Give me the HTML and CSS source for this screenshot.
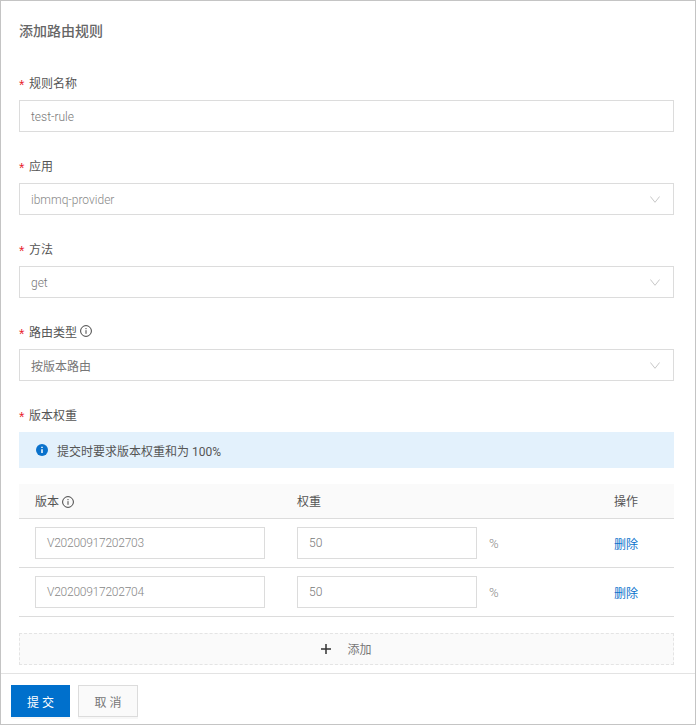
FILE: index.html
```html
<!DOCTYPE html>
<html lang="zh-CN">
<head>
  <meta charset="UTF-8">
  <title>添加路由规则</title>
  <link rel="stylesheet" href="styles.css">
</head>
<body>
  <div class="panel">
    <div class="content">
      <h2 class="title">添加路由规则</h2>

      <div class="field">
        <label class="field-label">规则名称</label>
        <div class="control latin">test-rule</div>
      </div>

      <div class="field">
        <label class="field-label">应用</label>
        <div class="control select latin">
          <span class="muted">ibmmq-provider</span>
          <svg class="arrow" viewBox="0 0 10 7"><path d="M.4.5 5 6.300 9.600.5"/></svg>
        </div>
      </div>

      <div class="field">
        <label class="field-label">方法</label>
        <div class="control select latin">
          <span>get</span>
          <svg class="arrow" viewBox="0 0 10 7"><path d="M.4.5 5 6.300 9.600.5"/></svg>
        </div>
      </div>

      <div class="field">
        <label class="field-label">路由类型
          <svg class="help" viewBox="0 0 12 12"><circle cx="6" cy="6" r="5.400"/><path d="M6 5.200v3.600M6 3v1.200"/></svg>
        </label>
        <div class="control select">
          <span>按版本路由</span>
          <svg class="arrow" viewBox="0 0 10 7"><path d="M.4.5 5 6.300 9.600.5"/></svg>
        </div>
      </div>

      <div class="field">
        <label class="field-label">版本权重</label>
        <div class="alert">
          <svg class="alert-icon" viewBox="0 0 12 12"><circle cx="6" cy="6" r="6"/><path d="M6 5.200v3.800M6 2.700v1.300"/></svg>
          提交时要求版本权重和为 100%
        </div>

        <table class="weights">
          <thead>
            <tr>
              <th class="col-version">版本
                <svg class="help" viewBox="0 0 12 12"><circle cx="6" cy="6" r="5.400"/><path d="M6 5.200v3.600M6 3v1.200"/></svg>
              </th>
              <th class="col-weight">权重</th>
              <th class="col-action">操作</th>
            </tr>
          </thead>
          <tbody>
            <tr>
              <td class="col-version"><div class="control cell-version">V20200917202703</div></td>
              <td class="col-weight"><div class="weight-wrap"><div class="control cell-weight">50</div><span class="unit">%</span></div></td>
              <td class="col-action"><a class="link">删除</a></td>
            </tr>
            <tr>
              <td class="col-version"><div class="control cell-version">V20200917202704</div></td>
              <td class="col-weight"><div class="weight-wrap"><div class="control cell-weight">50</div><span class="unit">%</span></div></td>
              <td class="col-action"><a class="link">删除</a></td>
            </tr>
          </tbody>
        </table>

        <div class="add-row">
          <svg class="plus" viewBox="0 0 10 10"><path d="M5 0v10M0 5h10"/></svg>
          <span>添加</span>
        </div>
      </div>
    </div>

    <div class="footer">
      <button class="btn btn-primary">提 交</button>
      <button class="btn btn-normal">取 消</button>
    </div>
  </div>
</body>
</html>
```

FILE: styles.css
```css
* {
  box-sizing: border-box;
}
body {
  margin: 0;
  font-family: "Roboto", "Noto Sans CJK SC", sans-serif;
  font-size: 12px;
  color: #555;
  background-color: #fff;
}

.panel {
  width: 696px;
  height: 725px;
  border: 1px solid #c4c4c4;
  display: flex;
  flex-direction: column;
}
.content {
  flex: 1;
  padding: 0 21px 0 18px;
}
.title {
  margin: 0;
  padding-top: 21px;
  height: 66px;
  font-size: 14px;
  line-height: 18px;
  font-weight: 500;
  color: #666;
}

/* form fields */
.field {
  height: 83px;
}
.field:last-child {
  height: auto;
}
.field-label {
  display: flex;
  align-items: center;
  height: 33px;
  padding-bottom: 3px;
  color: #555;
}
.field-label::before {
  content: "*";
  width: 10px;
  padding-top: 5px;
  color: #e8212b;
  font-family: "Liberation Sans", sans-serif;
  font-size: 14px;
  line-height: 14px;
}
.control {
  display: flex;
  align-items: center;
  height: 32px;
  padding: 0 11px;
  border: 1px solid #dcdcdc;
  color: #777;
  background-color: #fff;
}
.latin {
  padding-top: 1px;
  font-weight: 300;
}
.select {
  justify-content: space-between;
}
.muted {
  color: #888;
}
.arrow {
  width: 10px;
  height: 7px;
  margin-right: 2px;
  fill: none;
  stroke: #c8c8c8;
}
.help {
  width: 12px;
  height: 12px;
  margin-left: 3px;
  fill: none;
  stroke: #444;
}

/* notice */
.alert {
  display: flex;
  align-items: center;
  height: 36px;
  margin-top: 0;
  padding-left: 17px;
  color: #555;
  background-color: #e3f1fc;
}
.alert-icon {
  width: 12px;
  height: 12px;
  margin-right: 9px;
}
.alert-icon circle {
  fill: #0a72cc;
}
.alert-icon path {
  stroke: #fff;
  stroke-width: 1.500;
}

/* version table */
.weights {
  width: 655px;
  margin-top: 16px;
  border-collapse: collapse;
  table-layout: fixed;
}
.weights th {
  height: 34px;
  padding: 0;
  font-weight: 400;
  text-align: left;
  color: #555;
  background-color: #fafafa;
  border-bottom: 1px solid #dcdcdc;
}
.weights td {
  height: 49px;
  padding: 2px 0 1px;
  border-bottom: 1px solid #dcdcdc;
}
.weights .col-version {
  width: 278px;
  padding-left: 16px;
}
.weights .col-weight {
  width: 317px;
}
.weights .col-action {
  width: 60px;
}
.weights th .help {
  vertical-align: -2px;
  margin-left: 0;
}
.cell-version {
  width: 230px;
  color: #888;
  font-weight: 300;
  letter-spacing: -0.250px;
}
.cell-weight {
  width: 180px;
  font-weight: 300;
}
.weight-wrap {
  display: flex;
  align-items: center;
}
.unit {
  margin-left: 12px;
  color: #888;
  font-size: 13px;
  font-weight: 300;
}
.link {
  color: #0a72cc;
}

/* add button */
.add-row {
  display: flex;
  align-items: center;
  justify-content: center;
  height: 32px;
  margin-top: 16px;
  border: 1px dashed #e4e4e4;
  color: #777;
  background-color: #fafafa;
}
.plus {
  width: 10px;
  height: 10px;
  margin-right: 16px;
  fill: none;
  stroke: #333;
  stroke-width: 1.500;
}

/* footer */
.footer {
  display: flex;
  gap: 8px;
  height: 51px;
  padding: 11px 0 0 10px;
  border-top: 1px solid #e3e3e3;
}
.btn {
  height: 32px;
  padding: 0;
  font-family: inherit;
  font-size: 12px;
  border: 1px solid transparent;
  box-shadow: 0 2px 0 #f7f7f7;
}
.btn-primary {
  width: 59px;
  color: #fff;
  background-color: #0070cc;
}
.btn-normal {
  width: 60px;
  color: #777;
  background-color: #fafafa;
  border-color: #dcdcdc;
}
```
